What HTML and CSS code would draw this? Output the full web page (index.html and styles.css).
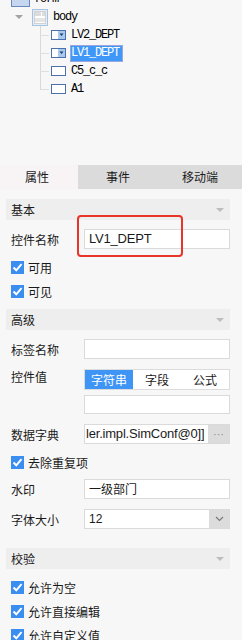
FILE: index.html
```html
<!DOCTYPE html>
<html lang="zh-CN">
<head>
  <meta charset="UTF-8" />
  <meta name="viewport" content="width=device-width, initial-scale=1.0"/>
  <title>控件属性</title>
  <link rel="stylesheet" href="styles.css">
</head>
<body>
  <div class="tree">
    <div class="node root">
      <span class="form-ico"></span>
      <span class="name">form</span>
    </div>
    <div class="node parent">
      <span class="arrow"></span>
      <svg class="body-ico" width="16" height="17" viewBox="0 0 16 17">
        <rect x="0.5" y="0.5" width="15" height="16" fill="#e6edf5" stroke="#a6c4e2"/>
        <rect x="2.5" y="2.5" width="11" height="12" fill="#fff" stroke="#d2d2d2"/>
        <rect x="3" y="3" width="6" height="4" fill="#dcdcdc"/>
        <rect x="10" y="3" width="3" height="4" fill="#dcdcdc"/>
        <rect x="3" y="9" width="10" height="4" fill="#e4e4e4"/>
      </svg>
      <span class="name">body</span>
    </div>
    <div class="children">
      <div class="node child">
        <svg class="ico" width="15" height="10" viewBox="0 0 15 10">
          <rect x="0.5" y="0.5" width="14" height="9" fill="#fff" stroke="#4d6fae"/>
          <rect x="7" y="1" width="7" height="8" fill="#a9c9ec"/>
          <path d="M8.5 3.5 L12.5 3.5 L10.5 6 Z" fill="#1c3a78"/>
        </svg>
        <span class="name">LV2_DEPT</span>
      </div>
      <div class="node child">
        <svg class="ico" width="15" height="10" viewBox="0 0 15 10">
          <rect x="0.5" y="0.5" width="14" height="9" fill="#fff" stroke="#4d6fae"/>
          <rect x="7" y="1" width="7" height="8" fill="#a9c9ec"/>
          <path d="M8.5 3.5 L12.5 3.5 L10.5 6 Z" fill="#1c3a78"/>
        </svg>
        <span class="name selected">LV1_DEPT</span>
      </div>
      <div class="node child">
        <svg class="ico" width="15" height="10" viewBox="0 0 15 10">
          <rect x="0.5" y="0.5" width="14" height="9" fill="#fff" stroke="#4d6fae"/>
        </svg>
        <span class="name">C5_c_c</span>
      </div>
      <div class="node child">
        <svg class="ico" width="15" height="10" viewBox="0 0 15 10">
          <rect x="0.5" y="0.5" width="14" height="9" fill="#fff" stroke="#4d6fae"/>
        </svg>
        <span class="name">A1</span>
      </div>
    </div>
  </div>

  <div class="panel">
    <div class="tabs">
      <div class="tab active">属性</div>
      <div class="tab">事件</div>
      <div class="tab">移动端</div>
    </div>

    <div class="props">
      <div class="group-head">基本<span class="caret"></span></div>

      <div class="field first">
        <label>控件名称</label>
        <div class="input latin">LV1_DEPT</div>
        <div class="mark"></div>
      </div>

      <div class="check">
        <span class="box"><svg width="13" height="13" viewBox="0 0 13 13"><path d="M2.5 6.5 L5.3 9.3 L10.5 3.2" fill="none" stroke="#fff" stroke-width="2"/></svg></span>
        可用
      </div>
      <div class="check">
        <span class="box"><svg width="13" height="13" viewBox="0 0 13 13"><path d="M2.5 6.5 L5.3 9.3 L10.5 3.2" fill="none" stroke="#fff" stroke-width="2"/></svg></span>
        可见
      </div>

      <div class="group-head gap">高级<span class="caret"></span></div>

      <div class="field first">
        <label>标签名称</label>
        <div class="input"></div>
      </div>

      <div class="field multi">
        <label>控件值</label>
        <div class="stack">
          <div class="seg">
            <span class="on">字符串</span>
            <span>字段</span>
            <span>公式</span>
          </div>
          <div class="input"></div>
        </div>
      </div>

      <div class="field">
        <label>数据字典</label>
        <div class="combo">
          <div class="text latin">ler.impl.SimConf@0]]</div>
          <div class="btn dots">···</div>
        </div>
      </div>

      <div class="check">
        <span class="box"><svg width="13" height="13" viewBox="0 0 13 13"><path d="M2.5 6.5 L5.3 9.3 L10.5 3.2" fill="none" stroke="#fff" stroke-width="2"/></svg></span>
        去除重复项
      </div>

      <div class="field tight">
        <label>水印</label>
        <div class="input">一级部门</div>
      </div>

      <div class="field">
        <label>字体大小</label>
        <div class="combo">
          <div class="text num">12</div>
          <div class="btn">
            <svg width="9" height="6" viewBox="0 0 9 6"><path d="M1 1 L4.5 4.5 L8 1" fill="none" stroke="#7a7a7a" stroke-width="1.2"/></svg>
          </div>
        </div>
      </div>

      <div class="group-head far">校验<span class="caret"></span></div>

      <div class="check">
        <span class="box"><svg width="13" height="13" viewBox="0 0 13 13"><path d="M2.5 6.5 L5.3 9.3 L10.5 3.2" fill="none" stroke="#fff" stroke-width="2"/></svg></span>
        允许为空
      </div>
      <div class="check">
        <span class="box"><svg width="13" height="13" viewBox="0 0 13 13"><path d="M2.5 6.5 L5.3 9.3 L10.5 3.2" fill="none" stroke="#fff" stroke-width="2"/></svg></span>
        允许直接编辑
      </div>
      <div class="check">
        <span class="box"><svg width="13" height="13" viewBox="0 0 13 13"><path d="M2.5 6.5 L5.3 9.3 L10.5 3.2" fill="none" stroke="#fff" stroke-width="2"/></svg></span>
        允许自定义值
      </div>
    </div>
  </div>
</body>
</html>
```

FILE: styles.css
```css
body {
  margin: 0;
  width: 242px;
  height: 640px;
  overflow: hidden;
  background-color: #f7f7f7;
  color: #1a1a1a;
  font-family: "Noto Sans CJK SC", "Liberation Sans", sans-serif;
  font-size: 12px;
}

/* ---- component tree ---- */

.tree {
  height: 165px;
  overflow: hidden;
  font-family: "Liberation Mono", "DejaVu Sans Mono", monospace;
  font-size: 12px;
  letter-spacing: -1.2px;
  color: #000;
}

.node {
  height: 18px;
  display: flex;
  align-items: center;
  white-space: nowrap;
}

.root {
  margin-top: -10px;
  padding-left: 11px;
}

.form-ico {
  width: 17px;
  height: 13px;
  margin-right: 4px;
  background-color: #c6d6ef;
  border: 1px solid #6a87bf;
}

.parent {
  padding-left: 15px;
}

.arrow {
  width: 0;
  height: 0;
  border-left: 4px solid transparent;
  border-right: 4px solid transparent;
  border-top: 4px solid #a3a3a3;
  margin-right: 9px;
}

.body-ico {
  margin-right: 5px;
}

.children {
  margin-left: 40px;
  width: 120px;
  background-image: linear-gradient(#d9d9d9, #d9d9d9);
  background-size: 1px 63px;
  background-repeat: no-repeat;
}

.child::before {
  content: "";
  width: 9px;
  height: 1px;
  margin-right: 2px;
  background-color: #dedede;
}

.child .name {
  margin-left: 4px;
  padding: 0 3px 0 0;
  line-height: 15px;
  border: 1px solid transparent;
}

.child .name.selected {
  background-color: #3f98f7;
  border-color: #9ba6dd;
  color: #fff;
}

/* ---- property panel ---- */

.tabs {
  display: grid;
  grid-template-columns: 78px 80px 1fr;
  height: 24px;
  line-height: 24px;
  background-color: #dcdbdc;
}

.tab {
  text-align: center;
}

.tab.active {
  background-color: #f8f4f6;
  padding-right: 4px;
}

.props {
  position: relative;
  padding: 10px 12px 0 6px;
}

.group-head {
  height: 21px;
  line-height: 21px;
  padding: 0 6px 0 5px;
  background-color: #eeeeee;
  display: flex;
  justify-content: space-between;
  align-items: center;
}

.group-head.gap {
  margin-top: 6px;
}

.group-head.far {
  margin-top: 19px;
}

.caret {
  width: 0;
  height: 0;
  border-left: 4px solid transparent;
  border-right: 4px solid transparent;
  border-top: 4px solid #bdbdbd;
}

.field {
  position: relative;
  display: flex;
  align-items: center;
  height: 20px;
  margin-top: 10px;
}

.field.first {
  margin-top: 9px;
}

.field.tight {
  margin-top: 5px;
}

.field label {
  width: 73px;
  padding-left: 5px;
  flex-shrink: 0;
}

.input {
  flex: 1;
  height: 20px;
  box-sizing: border-box;
  border: 1px solid #dadada;
  background-color: #fff;
  padding-left: 4px;
  line-height: 18px;
  white-space: nowrap;
  overflow: hidden;
}

.latin {
  font-family: "Liberation Sans", sans-serif;
  font-size: 13px;
  letter-spacing: -0.2px;
}

.mark {
  position: absolute;
  left: 71px;
  top: -14px;
  width: 106px;
  height: 42px;
  box-sizing: border-box;
  border: 2px solid #e8352b;
  border-radius: 4px;
}

.field.multi {
  height: auto;
  align-items: flex-start;
}

.field.multi label {
  line-height: 16px;
}

.stack {
  flex: 1;
  display: flex;
  flex-direction: column;
  gap: 5px;
}

.stack .input {
  flex: none;
  height: 19px;
}

.seg {
  display: grid;
  grid-template-columns: repeat(3, 1fr);
  height: 21px;
  box-sizing: border-box;
  border: 1px solid #dcdcdc;
  background-color: #fff;
  line-height: 19px;
  text-align: center;
}

.seg .on {
  background-color: #3f95f5;
  color: #fff;
}

.combo {
  flex: 1;
  display: flex;
  height: 20px;
  box-sizing: border-box;
  border: 1px solid #dadada;
  background-color: #fff;
  overflow: hidden;
}

.combo .text {
  flex: 1;
  padding-left: 1px;
  line-height: 18px;
  white-space: nowrap;
  overflow: hidden;
}

.combo .num {
  padding-left: 4px;
  font-family: "Liberation Sans", sans-serif;
  font-size: 12px;
}

.combo .btn {
  width: 20px;
  background-color: #dcdcdc;
  display: flex;
  align-items: center;
  justify-content: center;
}

.combo .dots {
  width: 21px;
  color: #8c8c8c;
  font-family: "Liberation Sans", sans-serif;
  font-size: 11px;
  letter-spacing: 0;
}

.check {
  display: flex;
  align-items: center;
  height: 24px;
  padding-left: 5px;
  margin-top: 6px;
}

.check + .check {
  margin-top: 0;
}

.box {
  width: 13px;
  height: 13px;
  margin-right: 4px;
  background-color: #3a8ef0;
  display: flex;
}
```
